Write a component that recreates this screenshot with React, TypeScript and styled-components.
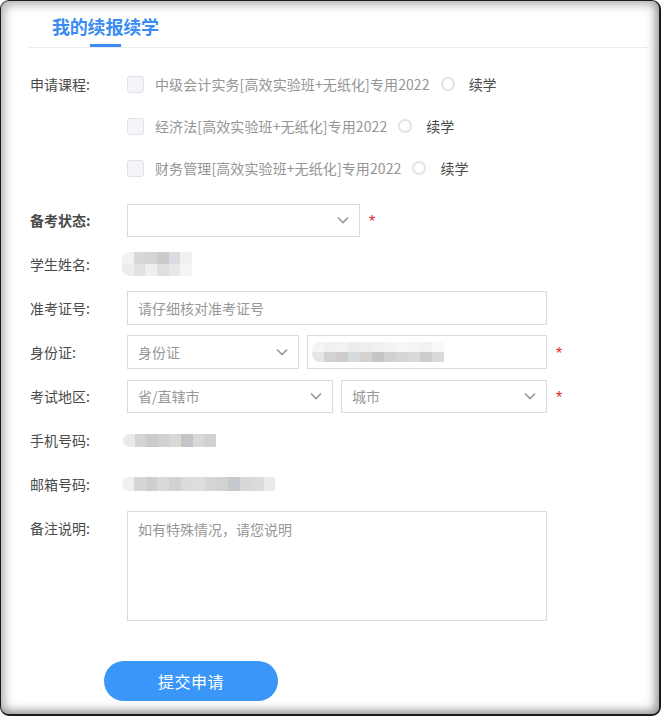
import React from "react";
import styled, { createGlobalStyle } from "styled-components";

const Global = createGlobalStyle`
  html, body { margin: 0; padding: 0; background: #fff; }
  body { font-family: "Noto Sans CJK SC", "Noto Sans", sans-serif; }
  * { box-sizing: border-box; }
`;

const Frame = styled.div`
  width: 661px;
  height: 716px;
  border-style: solid;
  border-color: #1c1c1c;
  border-width: 1px 2px 2px 1px;
  border-radius: 9px;
  background: #fff;
  overflow: hidden;
  box-shadow: inset 0 0 11px 3px rgba(0, 0, 0, 0.32),
    inset -3px -3px 7px rgba(0, 0, 0, 0.16);
  padding-left: 28px;
`;

const Header = styled.div`
  height: 47px;
  border-bottom: 1px solid #ececec;
  padding-left: 23px;
  display: flex;
  margin-right: 8px;
`;

const Tab = styled.div`
  display: flex;
  flex-direction: column;
  align-items: center;
  padding-top: 13px;
`;

const TabTitle = styled.div`
  font-size: 18px;
  line-height: 24px;
  font-weight: 700;
  color: #3a8cf5;
  letter-spacing: -0.2px;
`;

const TabBar = styled.div`
  width: 31px;
  height: 3px;
  background: #3a8cf5;
  margin-top: 6px;
`;

const Form = styled.div`
  padding-top: 15px;
  display: flex;
  flex-direction: column;
  gap: 10px;
  padding-left: 1px;
`;

const Field = styled.div<{ $top?: boolean }>`
  display: flex;
  align-items: ${(p) => (p.$top ? "flex-start" : "center")};
  min-height: 34px;
`;

const Label = styled.div<{ $bold?: boolean; $pad?: number }>`
  width: 97px;
  flex: none;
  font-size: 14px;
  line-height: 20px;
  color: #4a4a4a;
  font-weight: ${(p) => (p.$bold ? 700 : 400)};
  padding-top: ${(p) => p.$pad ?? 0}px;
  align-self: ${(p) => (p.$pad !== undefined ? "flex-start" : "center")};
`;

const CourseList = styled.div`
  display: flex;
  flex-direction: column;
  padding-bottom: 4px;
`;

const CourseRow = styled.div`
  height: 42px;
  display: flex;
  align-items: center;
`;

const CheckBox = styled.span`
  width: 17px;
  height: 17px;
  border: 1px solid #dfe2e7;
  border-radius: 3px;
  background: #f3f5f9;
  flex: none;
  margin-right: 11px;
`;

const CourseName = styled.span`
  font-size: 14px;
  line-height: 20px;
  color: #959595;
  margin-right: 11px;
  letter-spacing: 0.1px;
`;

const Radio = styled.span`
  width: 14px;
  height: 14px;
  border: 2px solid #e3e3e3;
  border-radius: 50%;
  flex: none;
  margin-right: 14px;
`;

const RadioText = styled.span`
  font-size: 14px;
  line-height: 20px;
  color: #4a4a4a;
`;

const Controls = styled.div`
  display: flex;
  align-items: center;
  gap: 8px;
`;

const Box = styled.div<{ $w: number; $h?: number; $pad?: number }>`
  width: ${(p) => p.$w}px;
  height: ${(p) => p.$h ?? 34}px;
  border: 1px solid #dadada;
  background: #fff;
  display: flex;
  align-items: center;
  padding: 0 10px 0 ${(p) => p.$pad ?? 10}px;
  flex: none;
`;

const BoxText = styled.span`
  font-size: 14px;
  line-height: 20px;
  color: #979797;
  flex: 1;
`;

const Area = styled.div`
  width: 420px;
  height: 110px;
  border: 1px solid #dadada;
  padding: 7px 10px;
  font-size: 14px;
  line-height: 20px;
  color: #979797;
`;

const Star = styled.span`
  color: #e8262a;
  font-size: 16px;
  margin-left: 9px;
  line-height: 14px;
  padding-top: 3px;
  font-family: "Liberation Sans", sans-serif;
`;

const Mosaic = styled.div<{ $shift: number }>`
  display: flex;
  flex-direction: column;
  filter: blur(0.5px);
  border-radius: 8px 0 0 8px;
  overflow: hidden;
  margin-left: ${(p) => p.$shift}px;
`;

const MosaicRow = styled.div<{ $h: number }>`
  display: flex;
  height: ${(p) => p.$h}px;
`;

const Cell = styled.span<{ $c: string; $w: number }>`
  width: ${(p) => p.$w}px;
  height: 100%;
  background: ${(p) => p.$c};
`;

const Submit = styled.button`
  margin: 40px 0 0 75px;
  width: 174px;
  height: 40px;
  border: none;
  border-radius: 20px;
  background: #3a97f9;
  color: #fff;
  font-family: inherit;
  font-size: 16px;
  font-weight: 400;
  letter-spacing: 0.5px;
  padding: 0;
`;

const Chevron = () => (
  <svg width="12" height="8" viewBox="0 0 12 8">
    <polyline points="1,1.5 6,6.5 11,1.5" fill="none" stroke="#999" strokeWidth="1.6" />
  </svg>
);

const Blur = ({ rows, w, h, shift = 0 }: { rows: string[][]; w: number; h: number; shift?: number }) => (
  <Mosaic $shift={shift}>
    {rows.map((r, i) => (
      <MosaicRow key={i} $h={h}>
        {r.map((c, j) => (
          <Cell key={j} $c={c} $w={w} />
        ))}
      </MosaicRow>
    ))}
  </Mosaic>
);

const courses = [
  "中级会计实务[高效实验班+无纸化]专用2022",
  "经济法[高效实验班+无纸化]专用2022",
  "财务管理[高效实验班+无纸化]专用2022",
];

export default function App() {
  return (
    <>
      <Global />
      <Frame>
        <Header>
          <Tab>
            <TabTitle>我的续报续学</TabTitle>
            <TabBar />
          </Tab>
        </Header>
        <Form>
          <Field $top>
            <Label $pad={11}>申请课程:</Label>
            <CourseList>
              {courses.map((c) => (
                <CourseRow key={c}>
                  <CheckBox />
                  <CourseName>{c}</CourseName>
                  <Radio />
                  <RadioText>续学</RadioText>
                </CourseRow>
              ))}
            </CourseList>
          </Field>
          <Field>
            <Label $bold>备考状态:</Label>
            <Box $w={233} $h={33}>
              <BoxText />
              <Chevron />
            </Box>
            <Star>*</Star>
          </Field>
          <Field>
            <Label>学生姓名:</Label>
            <Blur
              w={11.7}
              h={12}
              shift={-5}
              rows={[
                ["#f2f2f2", "#d8d8d8", "#d5d5d5", "#cbcbcb", "#d9dce0", "#f1f1f1"],
                ["#ececec", "#e2e2e2", "#efefef", "#dfdfdf", "#e8e8e8", "#f5f5f5"],
              ]}
            />
          </Field>
          <Field>
            <Label>准考证号:</Label>
            <Box $w={420}>
              <BoxText>请仔细核对准考证号</BoxText>
            </Box>
          </Field>
          <Field>
            <Label>身份证:</Label>
            <Controls>
              <Box $w={172}>
                <BoxText>身份证</BoxText>
                <Chevron />
              </Box>
              <Box $w={240} $pad={4}>
                <Blur
                  w={12}
                  h={10}
                  rows={[
                    ["#f5f5f5", "#f0f0f0", "#f2f2f2", "#ececec", "#eeeeee", "#f1f1f1", "#f3f3f3", "#f6f6f6", "#f4f4f4", "#f2f2f2", "#f9f9f9"],
                    ["#e6e6e6", "#d2d2d2", "#cfcccb", "#d7dadd", "#d4d2d0", "#c5c5c5", "#d0d0d0", "#d5d5d5", "#d9d9d9", "#cdcdcd", "#d9d9d9"],
                  ]}
                />
              </Box>
            </Controls>
            <Star>*</Star>
          </Field>
          <Field>
            <Label>考试地区:</Label>
            <Controls>
              <Box $w={206} $h={33}>
                <BoxText>省/直辖市</BoxText>
                <Chevron />
              </Box>
              <Box $w={206} $h={33}>
                <BoxText>城市</BoxText>
                <Chevron />
              </Box>
            </Controls>
            <Star>*</Star>
          </Field>
          <Field>
            <Label>手机号码:</Label>
            <Blur
              w={11.6}
              h={13}
              shift={-4}
              rows={[["#eceae8", "#d4d4d4", "#cbcbcb", "#d2d2d2", "#dad7d4", "#c5c5c9", "#d8d8d8", "#d1d1d5"]]}
            />
          </Field>
          <Field>
            <Label>邮箱号码:</Label>
            <Blur
              w={11.8}
              h={14}
              shift={-5}
              rows={[
                ["#f0f0f0", "#d6d6d6", "#cecece", "#dadada", "#d2d2d2", "#dcdcdc", "#dedede", "#d6d6d6", "#d4d2d0", "#c6c9cd", "#d8d8d8", "#dcdcdc", "#ebebeb"],
              ]}
            />
          </Field>
          <Field $top>
            <Label $pad={7}>备注说明:</Label>
            <Area>如有特殊情况，请您说明</Area>
          </Field>
        </Form>
        <Submit>提交申请</Submit>
      </Frame>
    </>
  );
}
